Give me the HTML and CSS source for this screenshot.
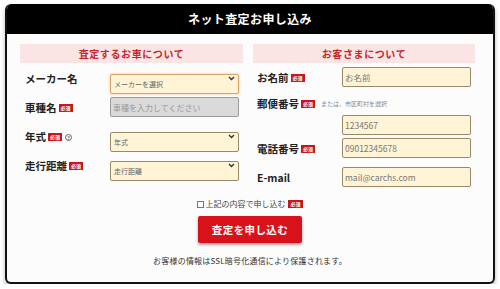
FILE: index.html
```html
<!DOCTYPE html>
<html lang="ja">
<head>
  <meta charset="UTF-8" />
  <meta name="viewport" content="width=device-width, initial-scale=1" />
  <title>ネット査定お申し込み</title>
  <link rel="stylesheet" href="styles.css">
</head>
<body>

  <!-- Form Box -->
  <div class="form-box">
    <div class="form-head">ネット査定お申し込み</div>

    <div class="form-body">
      <div class="columns">

        <!-- Car -->
        <div class="col col-left">
          <h3 class="col-title">査定するお車について</h3>

          <div class="row">
            <label class="lbl">メーカー名</label>
            <div class="select-wrap">
              <select class="field select focus">
                <option>メーカーを選択</option>
              </select>
              <svg class="chev" width="7" height="5" viewBox="0 0 7 5"><path d="M1 1l2.5 2.5L6 1" fill="none" stroke="#333" stroke-width="1.4"/></svg>
            </div>
          </div>

          <div class="row">
            <label class="lbl">車種名<span class="req">必須</span></label>
            <input class="field input disabled" type="text" placeholder="車種を入力してください" disabled>
          </div>

          <div class="row">
            <label class="lbl">年式<span class="req">必須</span><span class="help">?</span></label>
            <div class="select-wrap">
              <select class="field select">
                <option>年式</option>
              </select>
              <svg class="chev" width="7" height="5" viewBox="0 0 7 5"><path d="M1 1l2.5 2.5L6 1" fill="none" stroke="#333" stroke-width="1.4"/></svg>
            </div>
          </div>

          <div class="row">
            <label class="lbl">走行距離<span class="req">必須</span></label>
            <div class="select-wrap">
              <select class="field select">
                <option>走行距離</option>
              </select>
              <svg class="chev" width="7" height="5" viewBox="0 0 7 5"><path d="M1 1l2.5 2.5L6 1" fill="none" stroke="#333" stroke-width="1.4"/></svg>
            </div>
          </div>
        </div>

        <!-- Customer -->
        <div class="col col-right">
          <h3 class="col-title">お客さまについて</h3>

          <div class="row row-first">
            <label class="lbl">お名前<span class="req">必須</span></label>
            <input class="field input" type="text" placeholder="お名前">
          </div>

          <div class="row-label">
            <label class="lbl-inline">郵便番号<span class="req">必須</span></label>
            <span class="hint">または、市区町村を選択</span>
          </div>

          <div class="row row-zip">
            <span class="lbl"></span>
            <input class="field input" type="text" placeholder="1234567">
          </div>

          <div class="row row-tel">
            <label class="lbl">電話番号<span class="req">必須</span></label>
            <input class="field input" type="text" placeholder="09012345678">
          </div>

          <div class="row">
            <label class="lbl">E-mail</label>
            <input class="field input" type="text" placeholder="mail@carchs.com">
          </div>
        </div>
      </div>

      <!-- Submit -->
      <div class="agree">
        <span class="box"></span>上記の内容で申し込む<span class="req">必須</span>
      </div>
      <button class="submit">査定を申し込む</button>
      <p class="note">お客様の情報はSSL暗号化通信により保護されます。</p>
    </div>
  </div>

</body>
</html>
```

FILE: styles.css
```css
/* --- Reset & Layout --- */
* {
  box-sizing: border-box;
  margin: 0;
  padding: 0;
}
body {
  font-family: "Noto Sans CJK JP", "Noto Sans", sans-serif;
  background: #fff;
  color: #222;
}

/* --- Box --- */
.form-box {
  width: 490px;
  margin: 4px 0 0 5px;
  border: 2px solid #111;
  border-top: none;
  border-radius: 6px;
  background: #fdfcfc;
  box-shadow: 0 3px 4px rgba(0, 0, 0, 0.3);
  overflow: hidden;
}

.form-head {
  height: 30px;
  background: #000;
  color: #fff;
  font-size: 12px;
  font-weight: bold;
  letter-spacing: 0.4px;
  text-align: center;
  line-height: 30px;
}

.form-body {
  padding: 10px 13px 15px;
  display: flex;
  flex-direction: column;
  align-items: center;
}

.columns {
  display: flex;
  gap: 10px;
  align-self: flex-start;
}

.col {
  width: 223px;
  display: flex;
  flex-direction: column;
}
.col-right {
  width: 222px;
}

.col-title {
  height: 19px;
  background: #fbe4e4;
  color: #c4272c;
  font-size: 10px;
  font-weight: bold;
  letter-spacing: 0.6px;
  line-height: 19px;
  text-align: center;
}

/* --- Rows --- */
.row {
  display: flex;
  align-items: center;
  margin-top: 9px;
  padding-left: 5px;
}
.col-left .row:first-of-type {
  margin-top: 5px;
}
.col-right .row {
  padding-left: 4px;
}
.col-right .row-first {
  margin-top: 4px;
}
.col-right .row-zip {
  margin-top: 5px;
}
.col-right .row-tel {
  margin-top: 3px;
}

.lbl {
  width: 85px;
  flex-shrink: 0;
  font-size: 10.5px;
  font-weight: bold;
  display: flex;
  align-items: center;
}
.lbl-inline {
  font-size: 10.5px;
  font-weight: bold;
  display: flex;
  align-items: center;
}

.row-label {
  display: flex;
  align-items: center;
  height: 14px;
  margin-top: 9px;
  padding-left: 4px;
}

.hint {
  font-size: 6px;
  color: #888;
  margin-left: 6px;
}

.req {
  display: inline-block;
  background: #c8161d;
  color: #fff;
  font-size: 5px;
  font-weight: bold;
  line-height: 6px;
  padding: 1px 2px;
  margin-left: 2px;
  margin-top: 2px;
}

.help {
  display: inline-block;
  width: 7px;
  height: 7px;
  border: 1px solid #666;
  border-radius: 50%;
  font-size: 5px;
  line-height: 5px;
  text-align: center;
  color: #555;
  margin-left: 3px;
  margin-top: 2px;
}

/* --- Fields --- */
.field {
  width: 129px;
  height: 20px;
  border: 1px solid #9b8866;
  border-radius: 2px;
  background: #fff4d6;
  font-family: inherit;
  color: #666;
  outline: none;
}

.select-wrap {
  position: relative;
  width: 129px;
  height: 20px;
}

.select {
  appearance: none;
  -webkit-appearance: none;
  font-size: 7px;
  padding-left: 3px;
}
.select.focus {
  border-color: #d7a56b;
  box-shadow: 0 0 3px rgba(240, 150, 80, 0.6);
}

.chev {
  position: absolute;
  right: 4px;
  top: 8px;
}

.input {
  font-size: 8.5px;
  padding-left: 2px;
}
.input::placeholder {
  color: #777;
}
.input.disabled {
  background: #dadada;
  border-color: #9a9a9a;
  font-size: 8px;
}
.input.disabled::placeholder {
  color: #999;
}

/* --- Submit --- */
.agree {
  margin-top: 11px;
  font-size: 8px;
  line-height: 12px;
  color: #444;
  display: flex;
  align-items: center;
}
.agree .box {
  width: 7px;
  height: 7px;
  border: 1px solid #777;
  margin-right: 1px;
}
.agree .req {
  margin-left: 3px;
  margin-top: 0;
}

.submit {
  margin-top: 6px;
  width: 104px;
  height: 27px;
  border: none;
  border-radius: 2px;
  background: #d8121b;
  color: #fff;
  font-family: inherit;
  font-size: 10.5px;
  font-weight: bold;
  letter-spacing: 0.4px;
  box-shadow: 0 2px 3px rgba(0, 0, 0, 0.35);
  cursor: pointer;
}

.note {
  margin-top: 12px;
  font-size: 8px;
  letter-spacing: 0.2px;
  line-height: 12px;
  color: #333;
}
```
